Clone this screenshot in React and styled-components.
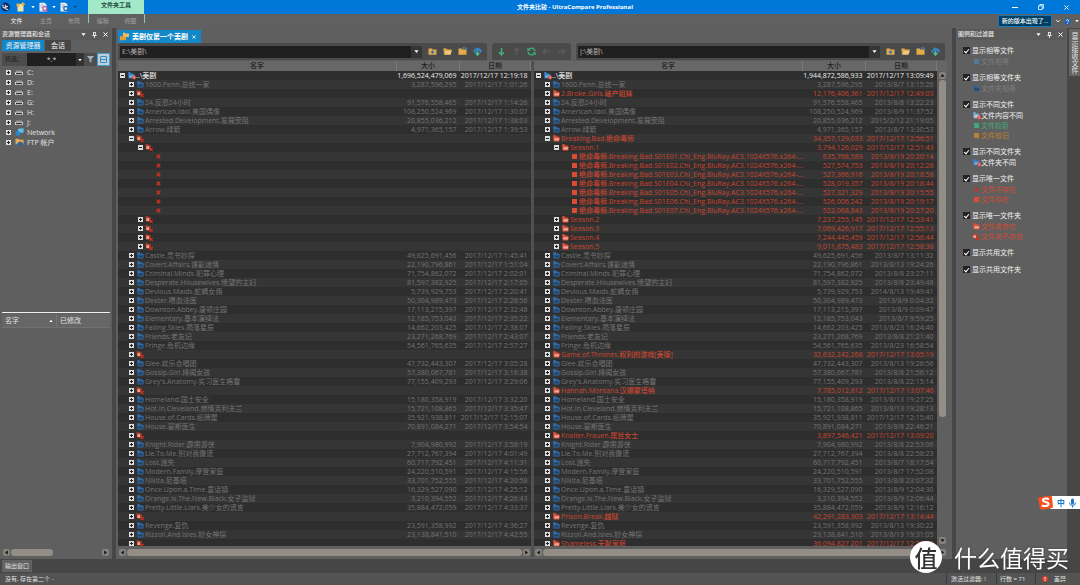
import React from "react";
import styled, { createGlobalStyle } from "styled-components";

const Global = createGlobalStyle`
  *, *::before, *::after { box-sizing: border-box; }
  html, body { margin: 0; height: 100%; background: #464646; }
  body {
    font: 7px/9px "Open Sans", "Noto Sans CJK SC", sans-serif;
    color: #e4e4e4;
    overflow: hidden;
  }
  button, input { font: inherit; color: inherit; border: 0; padding: 0; margin: 0; background: none; border-radius: 0; }
  ul { list-style: none; margin: 0; padding: 0; }
  svg { display: block; flex: none; overflow: visible; }
`;

/* ---------- shell ---------- */
const Shell = styled.div`
  display: flex;
  flex-direction: column;
  height: 100vh;
`;
const TitleBar = styled.header`
  display: grid;
  grid-template-columns: 1fr auto 1fr;
  align-items: center;
  height: 14px;
  background: #0078d9;
`;
const QuickBar = styled.div`
  display: flex;
  align-items: center;
  height: 14px;
  padding-left: 1px;
  gap: 4px;
`;
const ContextTab = styled.div`
  width: 56px;
  height: 14px;
  margin-left: 7px;
  padding-top: 1px;
  background: #a3e8c8;
  color: #1f4f45;
  font-size: 6px;
  font-weight: 600;
  text-align: center;
`;
const AppTitle = styled.h1`
  margin: 0;
  padding-left: 70px;
  font-size: 6px;
  font-weight: 700;
  white-space: nowrap;
  color: #fff;
`;
const WindowButtons = styled.div`
  display: flex;
  justify-content: flex-end;
  gap: 17px;
  padding-right: 9px;
`;
const IconButton = styled.button`
  display: grid;
  place-items: center;
  min-width: ${(p) => p.$w || 9}px;
  height: 10px;
`;
const Ribbon = styled.nav`
  display: flex;
  align-items: flex-start;
  height: 14px;
  background: #606060;
  padding-left: 1px;
`;
const RibbonTab = styled.button`
  width: ${(p) => p.$w || 28}px;
  height: 14px;
  font-size: 6px;
  color: ${(p) => (p.$active ? "#f4f4f4" : "#a0a0a0")};
`;
const RibbonContext = styled.div`
  display: flex;
  width: 57px;
  height: 9px;
  border: solid #8ac9ae;
  border-width: 0 1px;
`;
const RibbonRight = styled.div`
  display: flex;
  align-items: center;
  gap: 4px;
  margin: 1px 1px 0 auto;
`;
const UpdateButton = styled.button`
  width: 54px;
  height: 12px;
  border: 1px solid #1b78b5;
  background: #003f63;
  color: #fff;
  font-size: 6px;
  font-weight: 500;
  white-space: nowrap;
`;
const Body = styled.div`
  display: flex;
  flex: 1;
  min-height: 0;
  gap: 4px;
  background: #474747;
`;

/* ---------- docked panels ---------- */
const Dock = styled.aside`
  display: flex;
  flex-direction: column;
  width: ${(p) => p.$w}px;
  flex: none;
  padding: 1px 2px 0;
  background: #5f5f5f;
`;
const DockHead = styled.div`
  display: flex;
  align-items: center;
  height: 11px;
  flex: none;
  background: #5a5a5a;
`;
const DockTitle = styled.h2`
  margin: 0;
  flex: 1;
  font-size: 6px;
  font-weight: 500;
`;
const DockTabs = styled.div`
  display: flex;
  gap: 1px;
  height: 11px;
`;
const DockTab = styled.button`
  width: ${(p) => p.$w}px;
  height: 11px;
  background: ${(p) => (p.$active ? "#1187cc" : "#464646")};
  color: #f0f0f0;
`;
const FilterRow = styled.div`
  display: flex;
  align-items: center;
  height: 13px;
  margin-top: 2px;
  background: #4d4d4d;
`;
const FilterLabel = styled.label`
  width: 25px;
  padding-left: 3px;
  font-size: 6px;
  color: #191919;
`;
const FilterInput = styled.input`
  width: 49px;
  height: 13px;
  background: #202020;
  color: #cfcfcf;
  text-align: center;
`;
const DropButton = styled.button`
  display: grid;
  place-items: center;
  width: ${(p) => p.$w}px;
  height: ${(p) => p.$h}px;
  background: ${(p) => p.$bg || "#202020"};
`;
const ViewToggle = styled.button`
  display: grid;
  place-items: center;
  width: 13px;
  height: 13px;
  margin-left: auto;
  border: 1px solid #4a9bd0;
  background: #bcd0dc;
`;
const Drives = styled.ul`
  flex: none;
  padding-top: 1px;
  height: 247px;
  border-bottom: 1px solid #f0f0f0;
`;
const Drive = styled.li`
  display: flex;
  align-items: center;
  height: 10px;
  padding-left: 4px;
`;
const DriveIcon = styled.span`
  display: grid;
  place-items: center;
  width: 16px;
`;
const Toggle = styled.button`
  flex: none;
  width: 5px;
  height: 5px;
  background:
    linear-gradient(#222, #222) center / 3px 1px no-repeat,
    ${(p) => (p.$open ? "" : "linear-gradient(#222, #222) center / 1px 3px no-repeat,")}
    #dedede;
  visibility: ${(p) => (p.$hidden ? "hidden" : "visible")};
`;
const FileHead = styled.div`
  display: flex;
  height: 14px;
  margin-top: 1px;
  background: #666;
  border-bottom: 1px solid #717171;
  line-height: 13px;
`;
const FileHeadCell = styled.div`
  display: flex;
  align-items: center;
  justify-content: space-between;
  width: ${(p) => p.$w || "auto"};
  padding: 0 3px;
  border-right: ${(p) => (p.$w ? "1px solid #747474" : "0")};
`;
const Spacer = styled.div`
  flex: 1;
`;
const FileBottom = styled.div`
  height: 2px;
  flex: none;
`;

/* ---------- scroll bars ---------- */
const HScroll = styled.div`
  display: flex;
  align-items: center;
  flex: none;
  height: 10px;
  gap: 1px;
  padding: 0 1px;
`;
const Track = styled.div`
  display: flex;
  flex: 1;
  flex-direction: ${(p) => (p.$v ? "column" : "row")};
`;
const Thumb = styled.div`
  flex: 0 0 ${(p) => p.$size};
  ${(p) => (p.$v ? "width: 7px;" : "height: 7px;")}
  border-radius: 3px;
  background: #928e85;
`;
const ArrowButton = styled.button`
  display: grid;
  place-items: center;
  width: 7px;
  height: 7px;
  flex: none;
  border-radius: 2px;
  background: #86837c;
`;
const VScroll = styled.div`
  display: flex;
  flex: 1;
  flex-direction: column;
  align-items: center;
  width: 10px;
  gap: 1px;
  padding: 1px 0 2px;
`;

/* ---------- compare area ---------- */
const Main = styled.main`
  display: flex;
  flex-direction: column;
  flex: 1;
  min-width: 0;
  padding: 2px 0 2px 2px;
  background: #5f5f5f;
`;
const DocTab = styled.div`
  display: flex;
  align-items: center;
  align-self: flex-start;
  gap: 3px;
  height: 13px;
  padding: 0 4px 0 2px;
  background: #1388c8;
  color: #fff;
  font-weight: 700;
`;
const Tools = styled.div`
  display: flex;
  gap: 5px;
  height: 17px;
  flex: none;
  margin-bottom: 1px;
  padding-right: 7px;
`;
const ToolGroup = styled.div`
  display: flex;
  align-items: center;
  gap: 6px;
  ${(p) => (p.$grow ? "flex: 1;" : "flex: none;")}
  padding: ${(p) => (p.$grow ? "0 5px 0 2px" : "0 5px")};
  border-radius: 3px 3px 0 0;
  background: #4a4a4a;
`;
const PathBox = styled.div`
  display: flex;
  flex: 1;
  height: 12px;
`;
const PathInput = styled.input`
  flex: 1;
  min-width: 0;
  padding-left: 2px;
  background: #202020;
  color: #b9aeb0;
`;
const Panes = styled.div`
  display: grid;
  grid-template-columns: 413fr 3px 418fr;
  flex: 1;
  min-height: 0;
`;
const Splitter = styled.div`
  background: #505050;
`;
const Pane = styled.section`
  display: flex;
  flex-direction: column;
  min-width: 0;
  min-height: 0;
  padding-right: ${(p) => (p.$right ? 5 : 0)}px;
`;
const PaneBody = styled.div`
  display: flex;
  flex: 1;
  min-height: 0;
  margin-bottom: 1px;
`;
const ListClip = styled.div`
  flex: 1;
  min-width: 0;
  overflow: hidden;
  background: #2e2e2e;
`;
const ScrollColumn = styled.div`
  display: flex;
  flex-direction: column;
`;
const HeadStub = styled.div`
  height: 10px;
  background: #666;
`;
const Table = styled.table`
  width: 100%;
  table-layout: fixed;
  border-collapse: collapse;
`;
const Col = styled.col`
  width: ${(p) => p.$w || "auto"};
`;
const Th = styled.th`
  height: 10px;
  padding: 0;
  line-height: 10px;
  font-weight: 500;
  color: #1d1d1d;
  background: #676767;
  border-right: 1px solid #7a7a7a;
`;
const tones = { same: "#747474", only: "#ca452f", root: "#ececec" };
const Tr = styled.tr`
  color: ${(p) => tones[p.$tone]};
  font-weight: ${(p) => (p.$tone === "same" ? 400 : 500)};
  &:nth-child(even) { background: #353535; }
`;
const Td = styled.td`
  height: 9px;
  padding: 0 ${(p) => (p.$num ? 3 : 0)}px 0 0;
  text-align: ${(p) => (p.$num ? "right" : "left")};
  white-space: nowrap;
`;
const NameCell = styled.div`
  display: flex;
  align-items: center;
  height: 9px;
  padding-left: ${(p) => 2 + 9 * p.$level}px;
`;
const NodeIcon = styled.span`
  display: flex;
  align-items: center;
  justify-content: center;
  flex: none;
  width: 6px;
  margin: 0 2px 0 3px;
`;

/* ---------- legend ---------- */
const Legend = styled.div`
  display: flex;
  flex-direction: column;
  gap: 6px;
  padding: 5px;
`;
const Check = styled.label`
  display: flex;
  align-items: center;
  gap: 2px;
  height: 11px;
  color: #f2f2f2;
`;
const Box = styled.input.attrs({ type: "checkbox" })`
  appearance: none;
  display: grid;
  place-items: center;
  width: 7px;
  height: 7px;
  background: #232323;
  &:checked::after {
    content: "";
    width: 3px;
    height: 5px;
    border: solid #fff;
    border-width: 0 1px 1px 0;
    transform: rotate(40deg);
  }
`;
const Key = styled.li`
  display: flex;
  align-items: center;
  gap: 2px;
  height: 10px;
  padding-left: 10px;
  color: ${(p) => p.$c};
`;
const KeyIcon = styled.span`
  display: flex;
  width: 6px;
  justify-content: center;
`;
const Rail = styled.div`
  width: 12px;
  flex: none;
  margin-left: -3px;
  padding: 1px 0 0 1px;
`;
const RailTab = styled.button`
  width: 11px;
  height: 47px;
  background: #646464;
  writing-mode: vertical-rl;
`;

/* ---------- bottom ---------- */
const OutputBar = styled.div`
  display: flex;
  height: 14px;
  flex: none;
  padding: 1px 2px;
  background: #464646;
`;
const OutputTab = styled.button`
  width: 30px;
  height: 12px;
  background: #626262;
  font-size: 6px;
`;
const StatusBar = styled.footer`
  display: flex;
  align-items: center;
  height: 12px;
  flex: none;
  padding-left: 5px;
  background: #535353;
  font-size: 6px;
`;
const StatusCell = styled.div`
  display: flex;
  align-items: center;
  gap: 6px;
  width: ${(p) => p.$w}px;
  height: 12px;
  padding-left: ${(p) => p.$pad || 3}px;
  border-left: 1px solid #3c3c3c;
`;

/* ---------- overlays ---------- */
const Watermark = styled.div`
  position: fixed;
  right: 11px;
  bottom: 12px;
  display: flex;
  align-items: center;
  gap: 12px;
  color: #fff;
  font: 400 23px/32px "Noto Sans CJK SC", sans-serif;
  text-shadow: 0 0 2px #333;
`;
const Seal = styled.span`
  width: 32px;
  height: 32px;
  border-radius: 50%;
  background: #fff;
  color: #333;
  text-align: center;
  font-weight: 500;
  text-shadow: none;
`;
const ImeBar = styled.div`
  position: fixed;
  right: 0;
  bottom: 75px;
  display: flex;
  align-items: center;
  gap: 4px;
  width: 42px;
  height: 15px;
  color: #1f77c8;
  font: 700 8px/14px "Noto Sans CJK SC", sans-serif;
  background: linear-gradient(90deg, transparent 12px, #fff 12px) 0 1px / 100% 13px no-repeat;
`;

/* ---------- icons ---------- */
const Folder = ({ c, f = c, bad }) => (
  <svg width="7" height="7" viewBox="0 0 6 6">
    <path d="M0 .3h2.4l.6.9H5v1H6L5.400 5.600H.5Z" fill={c} />
    <path d="M1.300 2.800h3.800v2H1Z" fill={f} />
    {bad}
  </svg>
);
const badge = (
  <>
    <circle cx="5.300" cy="4.700" r="1.700" fill="#dd4635" />
    <path d="M5.300 3.700v1.300M5.300 5.300v.5" stroke="#fff" strokeWidth=".6" />
  </>
);
const icons = {
  same: <Folder c="#2f6cab" f="#27425f" />,
  only: <Folder c="#d9503b" f="#f4a596" />,
  root: <Folder c="#3f7fc4" f="#7badde" bad={badge} />,
  gone: (
    <svg width="8" height="7" viewBox="0 0 8 7">
      <path d="M.5 .2h2.800v.8H5.500v4.600H1Z" fill="#b8402f" />
      <path d="M1.400 2.200h2.600v2.800H1.400Z" fill="#f0a090" />
      <path d="M4.600 3.900 7.600 6.900M7.600 3.900 4.600 6.900" stroke="#d83018" strokeWidth="1.100" />
    </svg>
  ),
  x: (
    <svg width="5" height="5" viewBox="0 0 5 5">
      <path d="M.8.8 4.200 4.200M4.200.8.8 4.200" stroke="#c23420" strokeWidth="1.500" />
    </svg>
  ),
};
const Square = ({ c }) => (
  <svg width="5" height="5"><path d="M0 0h5v5H0Z" fill={c} /></svg>
);
const Caret = ({ d = 0, c = "#fff", s = 5 }) => (
  <svg width={s} height={s} viewBox="0 0 6 6">
    <path d="M.5 1.500h5L3 4.800Z" fill={c} transform={`rotate(${d} 3 3)`} />
  </svg>
);
const Cross = ({ s = 5 }) => (
  <svg width={s} height={s} viewBox="0 0 6 6">
    <path d="M.6.6 5.400 5.400M5.400.6.6 5.400" stroke="#fff" strokeWidth="1.200" />
  </svg>
);
const Pin = () => (
  <svg width="5" height="6" viewBox="0 0 5 6">
    <path d="M1.200.5h2.600M1.500.5v3M3.400.5v3M.3 3.500h4.400M2.500 3.500V6" stroke="#fff" strokeWidth=".8" fill="none" />
  </svg>
);
const ToolFolder = ({ kind }) => (
  <svg width="9" height="9" viewBox="0 0 9 9">
    <path d={kind === "open" ? "M.3 1.500h3.200l.8 1h4.400v1.200H2L.9 7.200Z" : "M.5 1.500h3.300l.8 1h3.900v5.200h-8Z"} fill="#e3a94b" />
    {kind === "add" && <path d="M4.500 3.400v3.400M2.800 5.100h3.400" stroke="#2472b9" strokeWidth="1.200" />}
    {kind === "open" && <path d="M2.200 3.600h6.600L7.600 7.800H1Z" fill="#f2c67b" />}
    {kind === "up" && <path d="M5 1h3.800M6.200 0 5 1l1.200 1M8.500 1v2" stroke="#3e8ad0" strokeWidth=".9" fill="none" />}
  </svg>
);
const CloudSync = () => (
  <svg width="9" height="9" viewBox="0 0 9 9">
    <path d="M.3 4.600A2 2 0 0 1 1.800 2.400 2.800 2.800 0 0 1 7 2.100a2 2 0 0 1 1.700 2.700l-.9.9H6.600V4.400L4.500 2.900 2.500 4.400v1.300H1.200Z" fill="#3583c6" />
    <path d="M4.500 3.600v3.600M2.700 6l1.800 2.200L6.300 6" fill="none" stroke="#4abf92" strokeWidth="1.400" />
  </svg>
);
const Arrow = ({ d, c }) => (
  <svg width="9" height="9" viewBox="0 0 9 9">
    <path d="M4.500 8V1.200M2 3.700l2.500-2.600L7 3.700" fill="none" stroke={c} strokeWidth="1.500" transform={`rotate(${d} 4.500 4.500)`} />
  </svg>
);
const Refresh = () => (
  <svg width="9" height="9" viewBox="0 0 9 9">
    <path d="M8.100 4.200A3.600 3.600 0 0 0 2 2.200M.9 4.800A3.600 3.600 0 0 0 7 6.800" fill="none" stroke="#3fae7c" strokeWidth="1.400" />
    <path d="M.3.4v3.400h3.400ZM8.700 8.600V5.200H5.300Z" fill="#3fae7c" />
  </svg>
);
const Logo = () => (
  <svg width="9" height="10" viewBox="0 0 9 10">
    <circle cx="4.500" cy="5" r="4.400" fill="#112b5c" />
    <path d="M2 2.500v2.200a1.200 1.200 0 0 0 2.400 0V2.800M7 4.700a1.500 1.500 0 1 0 0 2.400" fill="none" stroke="#d3e4ff" strokeWidth="1.100" />
  </svg>
);
const NewPage = () => (
  <svg width="9" height="10" viewBox="0 0 9 10">
    <path d="M1.500 2h6v7.500h-6Z" fill="#f3e2ac" />
    <path d="M.5 1.500h3v3h-3Z" fill="#e7b340" />
    <path d="M6.800.3v4M4.800 2.300h4" stroke="#f0b93f" strokeWidth="1.400" />
  </svg>
);
const Page = ({ mark }) => (
  <svg width="9" height="10" viewBox="0 0 9 10">
    <path d="M.5.8h5l2 2v6.700h-7Z" fill="#edf1f7" />
    <path d="M1.700 3h3M1.700 5h2.200" stroke="#7d92ad" strokeWidth=".8" />
    <circle cx="5.800" cy="6.500" r="2" fill="none" stroke={mark} strokeWidth="1.300" />
    <path d="m7 8 1.500 1.600" stroke={mark} strokeWidth="1.200" />
  </svg>
);
const DriveGlyph = ({ kind }) =>
  kind === "net" ? (
    <svg width="9" height="8" viewBox="0 0 9 8">
      <path d="M3 .8 8.600.2v4.400L3 5.200Z" fill="#58c2ee" />
      <circle cx="3" cy="5.400" r="2.400" fill="#2389cf" />
    </svg>
  ) : kind === "ftp" ? (
    <svg width="9" height="8" viewBox="0 0 9 8">
      <path d="M.5.7h3.200l.8 1h4v4.600h-8Z" fill="#e4ac55" />
      <path d="M3 7.500a1.600 1.600 0 0 1 .4-3 2 2 0 0 1 3.700.3 1.400 1.400 0 0 1 .4 2.700Z" fill="#2c65a8" />
    </svg>
  ) : (
    <svg width="8" height="5" viewBox="0 0 8 5">
      <path d="M1.500.5h5L8 2.500H0Z" fill="#999" />
      <path d="M0 2.300h8v2.400H0Z" fill="#e0e0e0" />
      <path d="M1 3.500h6" stroke="#333" strokeWidth="1.200" />
    </svg>
  );

/* ---------- data ---------- */
// [name, size, left time, right date, level, open]; entries with no left time exist on the right side only
const S = "2013/8/";
const N = "2017/12/17 ";
const episodes = [
  ["635,768,589", "20:20:14"], ["527,574,753", "20:12:28"], ["527,366,916", "20:18:58"],
  ["528,019,357", "20:18:44"], ["527,321,329", "20:15:55"], ["526,006,242", "20:19:17"],
  ["522,068,843", "20:27:20"],
].map(([size, t], i) => [`绝命毒师.Breaking.Bad.S01E0${i + 1}.Chi_Eng.BluRay.AC3.1024X576.x264-...`, size, "", `${S}19 ${t}`, 3]);
const rows = [
  ["1600.Penn.总统一家", "3,287,596,295", "1:01:26", S + "7 13:15:26"],
  ["2.Broke.Girls.破产姐妹", "12,176,406,361", "", N + "12:49:03"],
  ["24.反恐24小时", "91,576,558,465", "1:14:26", S + "8 13:22:23"],
  ["American.Idol.美国偶像", "108,250,524,969", "1:30:07", S + "9 11:37:52"],
  ["Arrested.Development.发展受阻", "20,855,036,212", "1:38:03", "2015/2/12 21:19:05"],
  ["Arrow.绿箭", "4,971,365,157", "1:39:53", S + "7 13:30:53"],
  ["Breaking.Bad.绝命毒师", "34,357,129,033", "", N + "12:56:51", 1, true],
  ["Season.1", "3,794,126,029", "", N + "12:51:43", 2, true],
  ...episodes,
  ["Season.2", "7,237,255,145", "", N + "12:53:41", 2],
  ["Season.3", "7,069,426,917", "", N + "12:55:13", 2],
  ["Season.4", "7,244,445,459", "", N + "12:56:44", 2],
  ["Season.5", "9,011,875,483", "", N + "12:58:38", 2],
  ["Castle.灵书妙探", "49,625,691,456", "1:45:41", S + "7 13:11:32"],
  ["Covert.Affairs.谍影迷情", "22,190,796,861", "1:51:04", S + "13 19:24:26"],
  ["Criminal.Minds.犯罪心理", "71,754,862,072", "2:02:01", S + "8 23:27:11"],
  ["Desperate.Housewives.绝望的主妇", "81,597,382,925", "2:17:05", S + "8 23:49:48"],
  ["Devious.Maids.蛇蝎女佣", "5,739,929,753", "2:20:41", "2014/8/13 19:49:41"],
  ["Dexter.嗜血法医", "50,304,989,473", "2:28:56", S + "9 0:04:32"],
  ["Downton.Abbey.唐顿庄园", "17,113,215,397", "2:32:48", S + "9 0:09:47"],
  ["Elementary.基本演绎法", "12,185,753,043", "2:35:22", S + "7 9:59:25"],
  ["Falling.Skies.陨落星辰", "14,662,203,425", "2:38:07", S + "23 16:24:40"],
  ["Friends.老友记", "23,271,268,769", "2:43:07", S + "8 21:21:40"],
  ["Fringe.危机边缘", "54,561,765,635", "2:57:27", S + "23 16:58:54"],
  ["Game.of.Thrones.权利的游戏[美版]", "32,632,242,268", "", N + "13:05:19"],
  ["Glee.欢乐合唱团", "47,732,443,307", "3:05:28", S + "13 19:26:56"],
  ["Gossip.Girl.绯闻女孩", "57,380,067,781", "3:16:38", S + "8 21:56:12"],
  ["Grey's.Anatomy.实习医生格雷", "77,155,409,293", "3:29:06", S + "8 22:15:14"],
  ["Hannah.Montana.汉娜蒙塔纳", "7,785,012,812", "", N + "13:07:46"],
  ["Homeland.国土安全", "15,180,358,919", "3:32:20", S + "13 19:27:25"],
  ["Hot.In.Cleveland.燃情克利夫兰", "15,721,108,865", "3:35:47", S + "13 19:28:13"],
  ["House.of.Cards.纸牌屋", "35,921,938,811", "12:15:07", N + "12:15:40"],
  ["House.豪斯医生", "70,891,084,271", "3:54:54", S + "8 22:46:21"],
  ["Knaller.Frauen.屌丝女士", "3,897,546,421", "", N + "13:09:20"],
  ["Knight.Rider.霹雳游侠", "7,904,980,992", "3:58:19", S + "8 22:53:06"],
  ["Lie.To.Me.别对我撒谎", "27,712,767,394", "4:01:49", S + "8 22:58:23"],
  ["Lost.迷失", "60,717,792,451", "4:11:31", S + "7 18:17:54"],
  ["Modern.Family.摩登家庭", "24,220,510,591", "4:15:56", S + "7 17:52:08"],
  ["Nikita.尼基塔", "33,701,752,555", "4:20:58", S + "8 23:07:32"],
  ["Once.Upon.a.Time.童话镇", "16,329,527,090", "4:25:12", S + "9 12:04:30"],
  ["Orange.Is.The.New.Black.女子监狱", "3,210,394,552", "4:26:43", S + "9 12:06:44"],
  ["Pretty.Little.Liars.美少女的谎言", "35,884,472,059", "4:33:37", S + "9 12:16:12"],
  ["Prison.Break.越狱", "42,291,283,303", "", N + "13:14:44"],
  ["Revenge.复仇", "23,591,358,992", "4:36:27", S + "13 19:30:22"],
  ["Rizzoli.And.Isles.妙女神探", "23,138,841,510", "4:42:55", S + "13 19:31:05"],
  ["Shameless.无耻家庭", "36,094,827,201", "", N + "12:29:39"],
];
const legend = [
  ["显示相等文件", [[<Square c="#55799c" />, "文件相等", "#7c7c7c"]]],
  ["显示相等文件夹", [[<Folder c="#35638f" f="#284868" />, "文件夹相等", "#7c7c7c"]]],
  ["显示不同文件", [
    [<Folder c="#7e9fc4" f="#c5d4e6" bad={badge} />, "文件内容不同", "#f2f2f2"],
    [<Square c="#42a67e" />, "文件较新", "#42a67e"],
    [<Square c="#b98130" />, "文件较旧", "#b98130"],
  ]],
  ["显示不同文件夹", [[icons.root, "文件夹不同", "#f2f2f2"]]],
  ["显示唯一文件", [[icons.x, "文件不存在", "#cf4b34"], [<Square c="#db4c33" />, "文件存在", "#cf4b34"]]],
  ["显示唯一文件夹", [[icons.only, "文件夹存在", "#cf4b34"], [icons.gone, "文件夹不存在", "#cf4b34"]]],
  ["显示共用文件", []],
  ["显示共用文件夹", []],
];

/* ---------- parts ---------- */
function Row({ tone, level, open, icon, name, size, date }) {
  return (
    <Tr $tone={tone}>
      <Td>
        <NameCell $level={level}>
          <Toggle $open={open} $hidden={level === 3} aria-label={open ? "折叠" : "展开"} />
          <NodeIcon>{icon}</NodeIcon>
          {name}
        </NameCell>
      </Td>
      <Td $num>{size}</Td>
      <Td $num>{date}</Td>
    </Tr>
  );
}

function Tree({ right }) {
  return (
    <Table>
      <colgroup><Col /><Col $w="63px" /><Col $w="71px" /></colgroup>
      <thead><tr><Th>名字</Th><Th>大小</Th><Th>日期</Th></tr></thead>
      <tbody>
        <Row tone="root" level={0} open icon={icons.root} name="..\美剧"
          size={right ? "1,944,872,586,933" : "1,696,524,479,069"}
          date={right ? "2017/12/17 13:09:49" : "2017/12/17 12:19:18"} />
        {rows.map(([name, size, l, r, level = 1, open]) => {
          const unique = !l;
          const shown = right || !unique;
          const leaf = level === 3;
          const icon = !unique ? icons.same
            : right ? (leaf ? <Square c="#db4c33" /> : icons.only)
            : leaf ? icons.x : icons.gone;
          return (
            <Row key={name} tone={unique ? "only" : "same"} level={level} open={open} icon={icon}
              name={shown ? name : ""} size={shown ? size : ""} date={right ? r : shown ? N + l : ""} />
          );
        })}
      </tbody>
    </Table>
  );
}

function HorizontalBar({ size = "100%" }) {
  return (
    <HScroll>
      <ArrowButton aria-label="向左"><Caret d={90} c="#111" /></ArrowButton>
      <Track><Thumb $size={size} /></Track>
      <ArrowButton aria-label="向右"><Caret d={-90} c="#111" /></ArrowButton>
    </HScroll>
  );
}

function VerticalBar({ size }) {
  return (
    <VScroll>
      <ArrowButton aria-label="向上"><Caret d={180} c="#111" /></ArrowButton>
      <Track $v><Thumb $v $size={size} /></Track>
      <ArrowButton aria-label="向下"><Caret c="#111" /></ArrowButton>
    </VScroll>
  );
}

function PathGroup({ value, label }) {
  return (
    <ToolGroup $grow>
      <PathBox>
        <PathInput defaultValue={value} aria-label={label} />
        <DropButton $w={11} $h={12} $bg="#353535" aria-label="历史路径"><Caret /></DropButton>
      </PathBox>
      <IconButton aria-label="添加文件夹"><ToolFolder kind="add" /></IconButton>
      <IconButton aria-label="打开文件夹"><ToolFolder kind="open" /></IconButton>
      <IconButton aria-label="上级文件夹"><ToolFolder kind="up" /></IconButton>
      <IconButton aria-label="云端"><CloudSync /></IconButton>
    </ToolGroup>
  );
}

function PanelHead({ title }) {
  return (
    <DockHead>
      <DockTitle>{title}</DockTitle>
      <IconButton $w={11} aria-label="菜单"><Caret /></IconButton>
      <IconButton $w={11} aria-label="固定"><Pin /></IconButton>
      <IconButton $w={10} aria-label="关闭"><Cross /></IconButton>
    </DockHead>
  );
}

export default function App() {
  return (
    <Shell>
      <Global />
      <TitleBar>
        <QuickBar>
          <Logo />
          <IconButton $w={13} aria-label="新建"><NewPage /></IconButton>
          <Caret s={4} />
          <IconButton aria-label="会话"><Page mark="#b964a8" /></IconButton>
          <Caret s={4} />
          <IconButton aria-label="查找"><Page mark="#246fc0" /></IconButton>
          <Caret s={4} c="#173f73" />
          <ContextTab>文件夹工具</ContextTab>
        </QuickBar>
        <AppTitle>文件夹比较 - UltraCompare Professional</AppTitle>
        <WindowButtons>
          <IconButton aria-label="最小化"><svg width="6" height="6"><path d="M0 3.500h6" stroke="#fff" /></svg></IconButton>
          <IconButton aria-label="还原">
            <svg width="6" height="6" viewBox="0 0 6 6"><path d="M.5 1.800h3.800v3.700H.5ZM1.800 1.800V.5h3.700v3.800H4.300" fill="none" stroke="#fff" strokeWidth=".8" /></svg>
          </IconButton>
          <IconButton aria-label="关闭"><Cross /></IconButton>
        </WindowButtons>
      </TitleBar>
      <Ribbon>
        <RibbonTab $w={31} $active>文件</RibbonTab>
        <RibbonTab>主页</RibbonTab>
        <RibbonTab>布局</RibbonTab>
        <RibbonContext>
          <RibbonTab>编辑</RibbonTab>
          <RibbonTab>视图</RibbonTab>
        </RibbonContext>
        <RibbonRight>
          <UpdateButton>新的版本出现了...</UpdateButton>
          <svg width="4" height="4"><path d="M0 .8 2 3 4 .8" fill="none" stroke="#ddd" /></svg>
          <IconButton $w={7} aria-label="帮助">
            <svg width="7" height="7" viewBox="0 0 7 7">
              <circle cx="3.500" cy="3.500" r="3.300" fill="#1f66b3" />
              <path d="M2.400 2.700a1.100 1.100 0 1 1 1.600 1l-.5.7M3.500 5v.8" fill="none" stroke="#fff" strokeWidth=".8" />
            </svg>
          </IconButton>
          <Caret s={4} />
        </RibbonRight>
      </Ribbon>

      <Body>
        <Dock $w={112}>
          <PanelHead title="资源管理器和会话" />
          <DockTabs>
            <DockTab $w={42} $active>资源管理器</DockTab>
            <DockTab $w={26}>会话</DockTab>
          </DockTabs>
          <FilterRow>
            <FilterLabel htmlFor="mask">筛选：</FilterLabel>
            <FilterInput id="mask" defaultValue="*.*" />
            <DropButton $w={8} $h={13} $bg="#333" aria-label="筛选列表"><Caret s={4} /></DropButton>
            <IconButton $w={13} aria-label="筛选">
              <svg width="7" height="7"><path d="M0 0h7L4.400 3.200v3.500L2.600 5.500V3.200Z" fill="#9fb0c0" /></svg>
            </IconButton>
            <ViewToggle aria-label="视图">
              <svg width="7" height="7"><path d="M.5.5h6v6h-6ZM.5 3.500h6" fill="none" stroke="#3c8ac6" /></svg>
            </ViewToggle>
          </FilterRow>
          <Drives>
            {["C:", "D:", "E:", "G:", "H:", "J:", "Network", "FTP 帐户"].map((n, i) => (
              <Drive key={n}>
                <Toggle aria-label="展开" />
                <DriveIcon><DriveGlyph kind={i === 6 ? "net" : i === 7 ? "ftp" : "disk"} /></DriveIcon>
                {n}
              </Drive>
            ))}
          </Drives>
          <FileHead>
            <FileHeadCell $w="55px">名字<Caret d={180} s={4} /></FileHeadCell>
            <FileHeadCell>已修改</FileHeadCell>
          </FileHead>
          <Spacer />
          <HorizontalBar size="47%" />
          <FileBottom />
        </Dock>

        <Main>
          <DocTab>
            <svg width="9" height="9" viewBox="0 0 9 9">
              <path d="M3 .8h2l.6.7H9v3.400H3Z" fill="#f1bd62" />
              <path d="M0 4h2l.6.7H6v3.500H0Z" fill="#e69b35" />
            </svg>
            美剧仅第一个美剧
            <IconButton $w={6} aria-label="关闭标签"><Cross s={4} /></IconButton>
          </DocTab>
          <Tools>
            <PathGroup value="E:\美剧\" label="左侧路径" />
            <ToolGroup>
              <IconButton aria-label="下一个"><Arrow d={180} c="#42ad78" /></IconButton>
              <IconButton aria-label="上一个"><Arrow d={0} c="#5b5b5b" /></IconButton>
              <IconButton aria-label="刷新"><Refresh /></IconButton>
              <IconButton aria-label="后退"><Arrow d={-90} c="#5b5b5b" /></IconButton>
              <IconButton aria-label="前进"><Arrow d={90} c="#5b5b5b" /></IconButton>
            </ToolGroup>
            <PathGroup value="J:\美剧\" label="右侧路径" />
          </Tools>
          <Panes>
            <Pane>
              <PaneBody><ListClip><Tree /></ListClip></PaneBody>
              <HorizontalBar />
            </Pane>
            <Splitter />
            <Pane $right>
              <PaneBody>
                <ListClip><Tree right /></ListClip>
                <ScrollColumn>
                  <HeadStub />
                  <VerticalBar size="74%" />
                </ScrollColumn>
              </PaneBody>
              <HorizontalBar />
            </Pane>
          </Panes>
        </Main>

        <Dock $w={111}>
          <PanelHead title="图例和过滤器" />
          <Legend>
            {legend.map(([title, keys]) => (
              <div key={title}>
                <Check><Box defaultChecked />{title}</Check>
                {keys.length > 0 && (
                  <ul>{keys.map(([icon, text, c]) => <Key key={text} $c={c}><KeyIcon>{icon}</KeyIcon>{text}</Key>)}</ul>
                )}
              </div>
            ))}
          </Legend>
        </Dock>
        <Rail><RailTab>显示接收文件</RailTab></Rail>
      </Body>

      <OutputBar><OutputTab>输出窗口</OutputTab></OutputBar>
      <StatusBar>
        没有, 存在第二个 -
        <Spacer />
        <StatusCell $w={50} $pad={4}>激活过滤器: !</StatusCell>
        <StatusCell $w={39}>行数 = 71</StatusCell>
        <StatusCell $w={45} $pad={6}>
          <svg width="6" height="6"><circle cx="3" cy="3" r="3" fill="#d23f2c" /><path d="M3 1v2.400M3 4v1" stroke="#fff" /></svg>
          差异
        </StatusCell>
      </StatusBar>

      <ImeBar>
        <svg width="15" height="15" viewBox="0 0 15 15">
          <path d="M.6 2.600 12.600.4Q13.600.6 13.900 1.800L15 11.600Q14.800 12.800 13.600 13.200L3.400 14.800Q2.400 14.600 2 13.600L.2 3.800Q.1 3 .6 2.600Z" fill="#f4511e" />
          <path d="M11 4.300C8 3 4.600 3.700 5 5.600 5.400 7.400 10.600 6.700 10.600 9 10.600 11.200 6.500 11.600 3.800 10.300" fill="none" stroke="#fff" strokeWidth="2" />
        </svg>
        中
        <svg width="7" height="10" viewBox="0 0 7 10">
          <path d="M2 2a1.500 1.500 0 0 1 3 0v3a1.500 1.500 0 0 1-3 0Z" fill="#1f77c8" />
          <path d="M.5 4.500a3 3 0 0 0 6 0M3.500 7.500V9.600" fill="none" stroke="#1f77c8" />
        </svg>
      </ImeBar>
      <Watermark><Seal>值</Seal>什么值得买</Watermark>
    </Shell>
  );
}
